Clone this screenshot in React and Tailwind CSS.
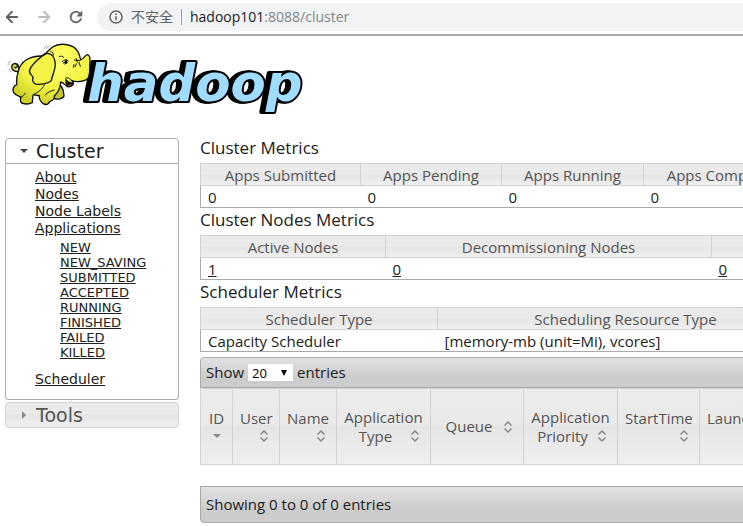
import { ArrowLeft, ArrowRight } from "lucide-react";

const appStates = ["NEW", "NEW_SAVING", "SUBMITTED", "ACCEPTED", "RUNNING", "FINISHED", "FAILED", "KILLED"];

const headerBg = "bg-[linear-gradient(#ebebeb,#eaeaea_45%,#e5e5e5_50%,#f0f0f0)]";
const barBg = "bg-[linear-gradient(#e2e2e2,#cccccc_65%,#cccccc)]";

function BrowserBar() {
  return (
    <header className="flex items-center h-9 border-b-2 border-[#ababab] bg-white text-[#5f6368]">
      <button type="button" aria-label="Back" className="ml-[3px]">
        <ArrowLeft size={18} strokeWidth={2.4} />
      </button>
      <button type="button" aria-label="Forward" className="ml-3.5 text-[#babcbe]">
        <ArrowRight size={18} strokeWidth={2.4} />
      </button>
      <button type="button" aria-label="Reload" className="ml-3.5">
        <svg width="18" height="18" viewBox="0 0 24 24" fill="currentColor">
          <path d="M17.65 6.35A7.96 7.96 0 0 0 12 4a8 8 0 1 0 7.73 10h-2.08A6 6 0 1 1 12 6c1.66 0 3.14.69 4.22 1.78L13 11h7V4z" stroke="currentColor" strokeWidth="0.6" />
        </svg>
      </button>
      <div className="flex flex-1 items-center h-7 ml-3 pl-3 rounded-l-full bg-[#f1f3f4] font-['Open_Sans','Noto_Sans_CJK_SC',sans-serif] text-sm">
        <svg width="14" height="14" viewBox="0 0 14 14" fill="none" stroke="currentColor" strokeWidth="1.5">
          <circle cx="7" cy="7" r="6" />
          <path d="M7 6.2v4M7 3.4v1.5" strokeWidth="1.6" />
        </svg>
        <span className="ml-2">不安全</span>
        <span className="w-px h-4 mx-2 bg-[#9aa0a6]" />
        <span className="text-[#202124]">hadoop101</span>
        <span className="text-[#80868b]">:8088/cluster</span>
      </div>
    </header>
  );
}

function Logo() {
  return (
    <svg width="310" height="84" viewBox="0 0 930 252" role="img" aria-label="hadoop" className="block">
      <defs>
        <radialGradient id="skin" cx="0.55" cy="0.3" r="0.7">
          <stop offset="0" stopColor="#ffff7a" />
          <stop offset="0.6" stopColor="#f4f441" />
          <stop offset="1" stopColor="#cfcf2a" />
        </radialGradient>
      </defs>
      <text
        x="262"
        y="194"
        fontFamily="'DejaVu Sans', Verdana, sans-serif"
        fontWeight="bold"
        fontStyle="italic"
        fontSize="154"
        fill="#a0dcff"
        stroke="#000"
        strokeWidth="12"
        strokeLinejoin="round"
        paintOrder="stroke"
        className="[filter:drop-shadow(-6px_0_0_#000)_drop-shadow(-6px_0_0_#000)]"
      >
        hadoop
      </text>
      <g stroke="#111" strokeWidth="4" strokeLinejoin="round" strokeLinecap="round">
        <path d="M55 106C48 108 36 104 35 94C34 84 45 79 51 86C55 92 48 98 44 94M52 84C57 90 57 98 56 106" fill="#d8d832" />
        <path d="M160 135C182 142 192 158 192 180C188 190 170 191 163 187Z" fill="#c8c82e" />
        <path d="M124 60C90 60 62 75 55 106C48 125 50 137 50 146C40 150 36 160 41 170C48 180 58 180 63 184C60 192 60 197 65 201C76 205 89 204 97 200C98 192 97 184 100 176C108 179 113 178 118 179C117 190 121 197 130 203C138 208 145 205 149 197C158 193 166 188 163 180C174 170 181 160 182 138C190 140 194 144 198 149C205 155 216 153 220 144C221 139 218 136 214 133C230 140 252 137 263 128C272 116 268 98 270 78C271 66 268 56 262 56C255 57 252 68 242 72C239 56 234 40 219 32C203 23 178 22 161 31C150 37 144 46 138 51Z" fill="url(#skin)" />
        <path d="M140 52C120 62 96 84 89 102C85 113 96 116 99 124C96 133 99 143 111 145C125 146 147 142 154 134C157 117 166 101 166 85C165 69 158 51 140 52Z" fill="#f3f347" />
        <path d="M160 58C162 52 157 47 152 46M196 127C202 123 207 125 214 133M100 176C116 168 128 158 133 147M60 184C68 182 73 178 75 172M136 177C140 170 151 165 163 162" fill="none" strokeWidth="3" />
        <path d="M198 131C202 138 209 142 219 141C217 151 208 153 201 147C197 142 198 135 198 131Z" fill="#111" />
        <path d="M206 146L215 145L211 150L205 149Z" fill="#d04a2a" stroke="none" />
        <path d="M178 62C183 59 187 60 191 64M187 77C193 70 201 69 205 75M190 81L200 78M194 84L202 80M223 72L239 74M229 68L232 78M237 79L241 91M230 83L225 92M222 86L220 94" fill="none" strokeWidth="3" />
        <ellipse cx="198" cy="77" rx="4" ry="6" fill="#111" stroke="none" />
        <path d="M132 38L139 29M139 39L146 30M24 86C24 80 28 77 32 76M28 99L33 108" fill="none" stroke="#777" strokeWidth="2" />
      </g>
    </svg>
  );
}

function SideNav() {
  return (
    <nav className="w-[174px] shrink-0 pt-0.5 font-['DejaVu_Sans',sans-serif] text-[#212121]">
      <h3>
        <button type="button" className="flex items-center w-full h-[26px] pl-3.5 border border-[#aaaaaa] rounded-t bg-white text-[19px] leading-6">
          <svg width="8" height="4" viewBox="0 0 8 4" fill="#454545" className="mr-2"><path d="M0 0h8L4 4z" /></svg>
          Cluster
        </button>
      </h3>
      <div className="h-[236px] border border-t-0 border-[#aaaaaa] rounded-b pl-[29px] pt-[5px] text-sm leading-[17px]">
        <ul>
          <li><a href="#about" className="underline">About</a></li>
          <li><a href="#nodes" className="underline">Nodes</a></li>
          <li><a href="#labels" className="underline">Node Labels</a></li>
          <li>
            <a href="#apps" className="underline">Applications</a>
            <ul className="pl-[25px] pt-[3px] pb-[11px] text-[13px] leading-[15px]">
              {appStates.map((state) => (
                <li key={state}><a href={`#${state}`} className="underline">{state}</a></li>
              ))}
            </ul>
          </li>
          <li><a href="#scheduler" className="underline">Scheduler</a></li>
        </ul>
      </div>
      <h3 className="mt-0.5">
        <button type="button" className={`flex items-center w-full h-[26px] pl-4 border border-[#d3d3d3] rounded text-[19px] leading-6 text-[#555555] ${headerBg}`}>
          <svg width="4" height="8" viewBox="0 0 4 8" fill="#888888" className="mr-2.5"><path d="M0 0v8L4 4z" /></svg>
          Tools
        </button>
      </h3>
    </nav>
  );
}

function MetricsTable({ title, columns }) {
  return (
    <section>
      <h2 className="h-[27px] text-[17px] leading-6">{title}</h2>
      <table className="table-fixed w-[900px] border border-[#aaaaaa] text-[15px] leading-5">
        <colgroup>
          {columns.map((col, i) => <col key={i} style={{ width: col.width }} />)}
        </colgroup>
        <thead>
          <tr className={headerBg}>
            {columns.map((col, i) => (
              <th key={i} className="h-[22px] p-0 border border-[#d3d3d3] font-normal text-[#555555]">{col.label}</th>
            ))}
          </tr>
        </thead>
        <tbody>
          <tr>
            {columns.map((col, i) => (
              <td key={i} className="h-[22px] py-0 px-[7px]">
                {col.link ? <a href="#nodes" className="underline">{col.value}</a> : col.value}
              </td>
            ))}
          </tr>
        </tbody>
      </table>
    </section>
  );
}

function SortIcon({ sorted }) {
  return (
    <svg width="16" height="16" viewBox="0 0 16 16" fill="none" stroke="#888888" strokeWidth="1.5" className="shrink-0">
      {sorted ? <path d="M4 6h8L8 10z" fill="#888888" stroke="none" /> : <path d="M4.5 6.5L8 3l3.5 3.5M4.5 9.5L8 13l3.5-3.5" />}
    </svg>
  );
}

const appColumns = [
  { width: 32, top: "ID", sorted: true },
  { width: 47, top: "User" },
  { width: 57, top: "Name" },
  { width: 94, top: "Application", bottom: "Type" },
  { width: 93, bottom: "Queue" },
  { width: 94, top: "Application", bottom: "Priority" },
  { width: 82, top: "StartTime" },
  { width: 92, top: "LaunchTime" },
  { width: 309 },
];

function AppsTable() {
  return (
    <section className="w-[900px] mt-[5px] text-[15px]">
      <div className={`flex items-center h-[31px] px-[5px] border border-[#aaaaaa] rounded-tl ${barBg}`}>
        <label className="flex items-center gap-1">
          Show
          <span className="relative">
            <select defaultValue="20" className="block appearance-none w-[45px] h-[17px] pl-1 bg-white text-[13px] leading-4 text-black">
              <option>20</option>
              <option>40</option>
              <option>60</option>
            </select>
            <svg width="6" height="6" viewBox="0 0 6 6" className="absolute right-1.5 top-1.5 pointer-events-none"><path d="M0 0h6L3 6z" /></svg>
          </span>
          entries
        </label>
      </div>
      <table className="table-fixed w-full leading-[19px] text-[#555555]">
        <colgroup>
          {appColumns.map((col, i) => <col key={i} style={{ width: col.width }} />)}
        </colgroup>
        <thead>
          <tr className={headerBg}>
            {appColumns.map((col, i) => (
              <th key={i} className="h-[76px] py-0 px-[7px] border border-[#d3d3d3] font-normal">
                {col.top && <div>{col.top}</div>}
                {(col.top || col.bottom) && (
                  <div className={col.sorted ? "flex justify-center" : "flex items-center justify-end"}>
                    {col.bottom && <span className="flex-1">{col.bottom}</span>}
                    <SortIcon sorted={col.sorted} />
                  </div>
                )}
              </th>
            ))}
          </tr>
        </thead>
      </table>
      <div className={`flex items-center h-[37px] mt-[21px] px-[5px] border border-[#aaaaaa] rounded-bl ${barBg}`}>
        Showing 0 to 0 of 0 entries
      </div>
    </section>
  );
}

export default function App() {
  return (
    <div className="min-h-screen overflow-hidden bg-white">
      <BrowserBar />
      <Logo />
      <div className="flex gap-[21px] pl-[5px] pt-4">
        <SideNav />
        <main className="flex-1 min-w-0 overflow-hidden font-['Open_Sans',sans-serif] text-[#212121]">
          <MetricsTable
            title="Cluster Metrics"
            columns={[
              { width: 160, label: "Apps Submitted", value: "0" },
              { width: 141, label: "Apps Pending", value: "0" },
              { width: 142, label: "Apps Running", value: "0" },
              { width: 162, label: "Apps Completed", value: "0" },
              { width: 295 },
            ]}
          />
          <MetricsTable
            title="Cluster Nodes Metrics"
            columns={[
              { width: 185, label: "Active Nodes", value: "1", link: true },
              { width: 326, label: "Decommissioning Nodes", value: "0", link: true },
              { width: 389, value: "0", link: true },
            ]}
          />
          <MetricsTable
            title="Scheduler Metrics"
            columns={[
              { width: 237, label: "Scheduler Type", value: "Capacity Scheduler" },
              { width: 376, label: "Scheduling Resource Type", value: "[memory-mb (unit=Mi), vcores]" },
              { width: 287 },
            ]}
          />
          <AppsTable />
        </main>
      </div>
    </div>
  );
}
